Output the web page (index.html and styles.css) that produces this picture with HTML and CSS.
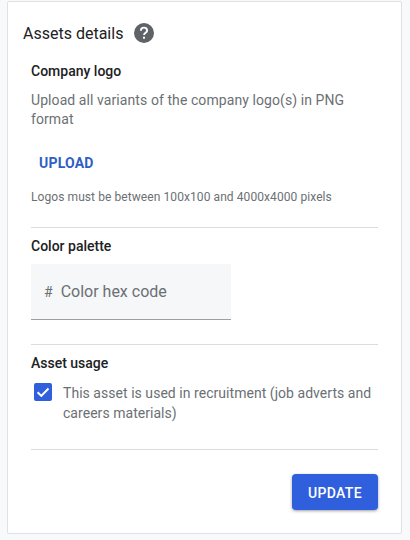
FILE: index.html
```html
<!DOCTYPE html>
<html lang="en">
<head>
<meta charset="utf-8">
<title>Assets details</title>
<link rel="stylesheet" href="styles.css">
</head>
<body>
<main class="card">
  <h1 class="title">Assets details
    <svg class="help" viewBox="0 0 20 20" aria-hidden="true"><circle cx="10" cy="10" r="10" fill="#5f6368"/><path d="M6.9 7.7a3.1 3.1 0 0 1 6.2 0c0 2-3.1 2.2-3.1 4.4" fill="none" stroke="#fff" stroke-width="1.9"/><rect x="9" y="13.7" width="2" height="2" fill="#fff"/></svg>
  </h1>
  <div class="body">
    <section class="logo">
      <h2>Company logo</h2>
      <p class="desc">Upload all variants of the company logo(s) in PNG format</p>
      <button class="upload">UPLOAD</button>
      <p class="hint">Logos must be between 100x100 and 4000x4000 pixels</p>
    </section>
    <section class="palette">
      <h2>Color palette</h2>
      <div class="field"><span class="hash">#</span><span>Color hex code</span></div>
    </section>
    <section class="usage">
      <h2>Asset usage</h2>
      <div class="check">
        <svg class="box" viewBox="0 0 18 18" aria-hidden="true"><rect width="18" height="18" rx="2" fill="#2f5fdc"/><path d="M3.6 9.2l3.7 3.7 7.2-7.4" fill="none" stroke="#fff" stroke-width="2"/></svg>
        <span>This asset is used in recruitment (job adverts and careers materials)</span>
      </div>
    </section>
    <div class="actions"><button class="update">UPDATE</button></div>
  </div>
</main>
</body>
</html>
```
FILE: styles.css
```css
* { box-sizing: border-box; }
html, body { margin: 0; height: 540px; overflow: hidden; }
body { background: #f8f9fa; font-family: Roboto, "Liberation Sans", sans-serif; padding: 1px 8px 6px 7px; }
.card { height: 533px; background: #fff; border: 1px solid #dfe1e5; border-radius: 2px; padding: 20px 0 0 15px; }
.title { margin: 0; height: 22px; display: flex; align-items: center; gap: 11px; font-size: 16px; font-weight: 400; color: #202124; }
.help { width: 20px; height: 20px; }
.body { padding: 0 23px 0 8px; }
h2 { margin: 0; font-size: 14px; line-height: 20px; font-weight: 500; color: #202124; }
.logo { padding-top: 17px; border-bottom: 1px solid #dadce0; height: 184px; }
.desc { margin: 10px 0 0; font-size: 14px; line-height: 19px; color: #6b7074; letter-spacing: .08px; }
.upload { display: block; margin: 26px 0 0 8px; padding: 0; border: 0; background: none; color: #2f5fc4; font: 700 14px/16px Roboto, sans-serif; letter-spacing: .2px; }
.hint { margin: 18px 0 0; font-size: 12px; line-height: 16px; color: #6b7074; letter-spacing: .08px; }
.palette { height: 117px; padding-top: 8px; border-bottom: 1px solid #dadce0; }
.field { margin-top: 8px; width: 200px; height: 56px; background: #f6f7f9; border-bottom: 1px solid #9aa0a6; display: flex; align-items: center; gap: 8px; padding-left: 13px; font-size: 16px; color: #6b7074; }
.hash { font-size: 14px; }
.usage { height: 105px; padding-top: 8px; border-bottom: 1px solid #dadce0; }
.check { display: flex; gap: 11px; margin-top: 10px; padding-left: 3px; font-size: 14px; line-height: 20px; color: #6b7074; letter-spacing: .04px; }
.box { flex: none; width: 18px; height: 18px; }
.actions { display: flex; justify-content: flex-end; padding-top: 24px; }
.update { width: 86px; height: 36px; border: 0; border-radius: 4px; background: #2f5fdc; color: #fff; font: 500 14px/36px Roboto, sans-serif; letter-spacing: .3px; box-shadow: 0 1px 3px rgba(60,64,67,.5); }
```
